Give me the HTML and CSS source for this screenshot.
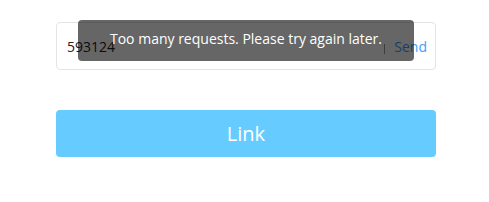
FILE: index.html
```html
<!doctype html>
<html lang="en">
<head>
  <meta charset="utf-8">
  <title>Verify</title>
  <link rel="stylesheet" href="styles.css">
</head>
<body>
  <div class="form">
    <div class="code-field">
      <input class="code-input" value="593124">
      <span class="divider"></span>
      <a class="send" href="#">Send</a>
    </div>
    <button class="link-btn">Link</button>
  </div>
  <div class="toast">Too many requests. Please try again later.</div>
</body>
</html>
```
FILE: styles.css
```css
* {
  box-sizing: border-box;
}

body {
  margin: 0;
  padding: 22px 53px 0 56px;
  font-family: 'Open Sans', 'Noto Sans', sans-serif;
  background: #fff;
  color: #333;
}

.form {
  width: 380px;
}

.code-field {
  display: flex;
  align-items: center;
  height: 48px;
  padding: 0 8px 0 10px;
  border: 1px solid #e4e4e4;
  border-radius: 4px;
}

.code-input {
  flex: 1;
  min-width: 0;
  border: none;
  outline: none;
  padding: 0;
  font-family: inherit;
  font-size: 14px;
  color: #222;
}

.divider {
  width: 1px;
  height: 10px;
  margin: 6px 9px 0 0;
  background: #999;
}

.send {
  color: #409eff;
  font-size: 14px;
  text-decoration: none;
}

.link-btn {
  display: block;
  width: 100%;
  height: 47px;
  margin-top: 40px;
  border: none;
  border-radius: 4px;
  background: #66ccff;
  color: #fff;
  font-family: inherit;
  font-size: 20px;
}

.toast {
  position: absolute;
  top: 20px;
  left: 78px;
  width: 336px;
  height: 41px;
  padding-bottom: 4px;
  display: flex;
  align-items: center;
  justify-content: center;
  background: rgba(0, 0, 0, 0.6);
  border-radius: 4px;
  color: #fff;
  font-size: 14px;
}
```
